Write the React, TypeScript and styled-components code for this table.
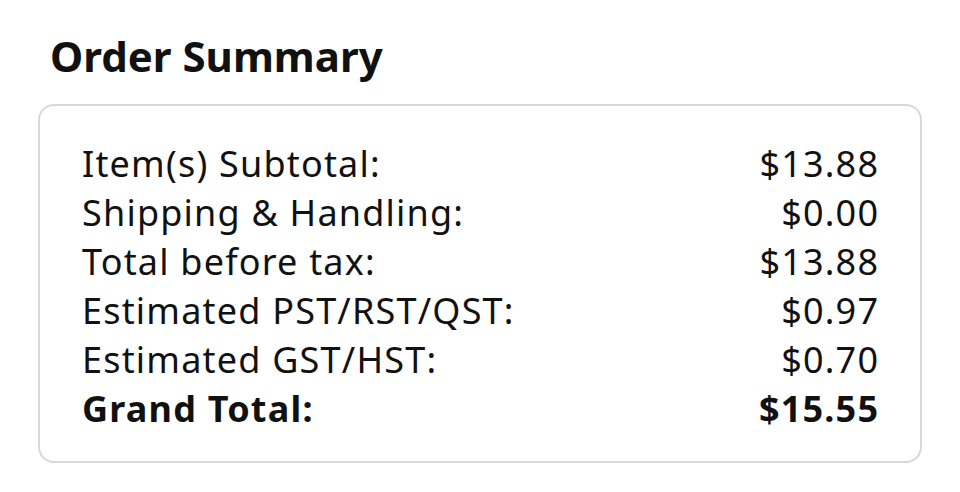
import React from 'react'
import styled, { createGlobalStyle } from 'styled-components'

const GlobalStyle = createGlobalStyle`
  html, body {
    margin: 0;
    padding: 0;
    background: #ffffff;
  }
  body {
    font-family: "Noto Sans", "Open Sans", sans-serif;
    color: #0f1111;
  }
`

const Page = styled.div`
  width: 960px;
  height: 492px;
  box-sizing: border-box;
  padding: 28px 38px 0 38px;
  background: #ffffff;
`

const Title = styled.h2`
  margin: 0 0 20px 12px;
  font-size: 42px;
  font-weight: 700;
  line-height: 56px;
  color: #111111;
`

const Card = styled.div`
  box-sizing: border-box;
  width: 884px;
  height: 359px;
  border: 2px solid #d8d8d8;
  border-radius: 16px;
  padding: 33px 42px 0 42px;
`

const Row = styled.div<{ $bold?: boolean }>`
  display: flex;
  justify-content: space-between;
  align-items: baseline;
  font-size: 36px;
  line-height: 49px;
  letter-spacing: 1.2px;
  font-weight: ${(p) => (p.$bold ? 700 : 400)};
  color: #111111;
`

const Label = styled.span``
const Amount = styled.span`
  text-align: right;
  margin-right: -1.2px;
`

const rows = [
  ['Item(s) Subtotal:', '$13.88'],
  ['Shipping & Handling:', '$0.00'],
  ['Total before tax:', '$13.88'],
  ['Estimated PST/RST/QST:', '$0.97'],
  ['Estimated GST/HST:', '$0.70'],
]

const App: React.FC = () => {
  return (
    <>
      <GlobalStyle />
      <Page>
        <Title>Order Summary</Title>
        <Card>
          {rows.map(([label, amount]) => (
            <Row key={label}>
              <Label>{label}</Label>
              <Amount>{amount}</Amount>
            </Row>
          ))}
          <Row $bold>
            <Label>Grand Total:</Label>
            <Amount>$15.55</Amount>
          </Row>
        </Card>
      </Page>
    </>
  )
}

export default App
